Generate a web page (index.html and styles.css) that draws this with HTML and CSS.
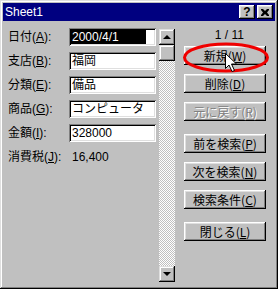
FILE: index.html
```html
<!DOCTYPE html>
<html lang="ja">
<head>
    <meta charset="UTF-8">
    <title>Sheet1</title>
    <link rel="stylesheet" href="styles.css">
</head>
<body>
<div class="window">
    <div class="titlebar">
        <span class="title">Sheet1</span>
        <div class="title-buttons">
            <span class="tbtn help">?</span>
            <span class="tbtn close">
                <svg width="8" height="7" viewBox="0 0 8 7"><path d="M0 0h2l2 2 2-2h2v1l-2 2.5 2 2.5v1h-2l-2-2-2 2h-2v-1l2-2.5-2-2.5z" fill="#000"/></svg>
            </span>
        </div>
    </div>
    <div class="content">
        <div class="fields">
            <div class="row">
                <label>日付(<u>A</u>):</label>
                <div class="field"><span class="selected">2000/4/1</span></div>
            </div>
            <div class="row">
                <label>支店(<u>B</u>):</label>
                <div class="field">福岡</div>
            </div>
            <div class="row">
                <label>分類(<u>E</u>):</label>
                <div class="field">備品</div>
            </div>
            <div class="row">
                <label>商品(<u>G</u>):</label>
                <div class="field">コンピュータ</div>
            </div>
            <div class="row">
                <label>金額(<u>I</u>):</label>
                <div class="field">328000</div>
            </div>
            <div class="row">
                <label>消費税(<u>J</u>):</label>
                <span class="value">16,400</span>
            </div>
        </div>
        <div class="scrollbar">
            <div class="sb-btn"><span class="arrow-up"></span></div>
            <div class="sb-thumb"></div>
            <div class="sb-track"></div>
            <div class="sb-btn"><span class="arrow-down"></span></div>
        </div>
        <div class="actions">
            <div class="counter">1 / 11</div>
            <button class="btn">新規(<u>W</u>)</button>
            <button class="btn">削除(<u>D</u>)</button>
            <button class="btn" disabled>元に戻す(R)</button>
            <button class="btn group">前を検索(<u>P</u>)</button>
            <button class="btn">次を検索(<u>N</u>)</button>
            <button class="btn">検索条件(<u>C</u>)</button>
            <button class="btn group">閉じる(<u>L</u>)</button>
        </div>
    </div>

    <!-- annotation over the 新規 button -->
    <svg class="mark" width="90" height="34" viewBox="0 0 90 34">
        <ellipse cx="45" cy="16.5" rx="41.5" ry="13.5" fill="none" stroke="#f00000" stroke-width="3"/>
    </svg>
    <svg class="cursor" width="13" height="20" viewBox="0 0 13 20">
        <path d="M0.5 0.5v15l3.5-3.5 3 6.5 2.5-1-3-6.5h5z" fill="#fff" stroke="#000" stroke-width="1"/>
    </svg>
</div>
</body>
</html>
```

FILE: styles.css
```css
body {
    margin: 0;
    font-family: "Liberation Sans", "Noto Sans CJK JP", sans-serif;
    font-size: 12px;
    color: #000;
    background: #c0c0c0;
}
.window {
    position: relative;
    width: 278px;
    height: 289px;
    box-sizing: border-box;
    padding: 3px;
    background: #c0c0c0;
    box-shadow: inset -1px -1px #000, inset 1px 1px #dfdfdf, inset -2px -2px #808080, inset 2px 2px #fff;
}
.titlebar {
    height: 18px;
    background: #000080;
    color: #fff;
    display: flex;
    align-items: center;
    justify-content: space-between;
    padding: 0 2px;
}
.title {
    font-size: 12px;
    line-height: 14px;
}
.title-buttons {
    display: flex;
    gap: 2px;
}
.tbtn {
    width: 16px;
    height: 14px;
    box-sizing: border-box;
    background: #c0c0c0;
    color: #000;
    display: flex;
    align-items: center;
    justify-content: center;
    box-shadow: inset -1px -1px #000, inset 1px 1px #fff, inset -2px -2px #808080, inset 2px 2px #dfdfdf;
}
.tbtn.help {
    font-family: "Liberation Sans", sans-serif;
    font-weight: bold;
    font-size: 12px;
    line-height: 12px;
}
.content {
    display: flex;
    padding-top: 7px;
}
.fields {
    width: 153px;
    padding-left: 5px;
    box-sizing: border-box;
}
.row {
    display: flex;
    align-items: center;
    height: 18px;
    margin-bottom: 6px;
}
.row label {
    width: 61px;
    line-height: 14px;
    white-space: nowrap;
}
.field {
    width: 87px;
    height: 18px;
    box-sizing: border-box;
    padding: 2px 0 0 3px;
    background: #fff;
    line-height: 14px;
    white-space: nowrap;
    overflow: hidden;
    box-shadow: inset 1px 1px #808080, inset -1px -1px #fff, inset 2px 2px #000, inset -2px -2px #dfdfdf;
}
.field .selected {
    display: block;
    width: 74px;
    margin-left: -1px;
    padding-left: 1px;
    background: #000;
    color: #fff;
}
.value {
    line-height: 14px;
    padding-left: 3px;
}
.scrollbar {
    margin: 1px 0 0 3px;
    width: 16px;
    height: 253px;
    display: flex;
    flex-direction: column;
}
.sb-btn,
.sb-thumb {
    height: 16px;
    flex: none;
    background: #c0c0c0;
    box-shadow: inset -1px -1px #000, inset 1px 1px #dfdfdf, inset -2px -2px #808080, inset 2px 2px #fff;
    display: flex;
    align-items: center;
    justify-content: center;
}
.sb-track {
    flex: 1;
    background: repeating-conic-gradient(#fff 0 25%, #c0c0c0 0 50%) 0 0 / 2px 2px;
}
.arrow-up,
.arrow-down {
    width: 0;
    height: 0;
    border-left: 4px solid transparent;
    border-right: 4px solid transparent;
}
.arrow-up {
    border-bottom: 4px solid #000;
    margin-top: -1px;
}
.arrow-down {
    border-top: 4px solid #000;
}
.actions {
    margin-left: 9px;
    width: 82px;
    display: flex;
    flex-direction: column;
}
.counter {
    line-height: 14px;
    text-align: right;
    padding-right: 22px;
    margin-bottom: 4px;
}
.btn {
    height: 19px;
    margin-bottom: 9px;
    padding: 0;
    border: none;
    background: #c0c0c0;
    font-family: "Noto Sans CJK JP", sans-serif;
    font-size: 12px;
    line-height: 14px;
    color: #000;
    box-shadow: inset -1px -1px #000, inset 1px 1px #fff, inset -2px -2px #808080, inset 2px 2px #dfdfdf;
}
.btn.group {
    margin-top: 4px;
}
.btn:disabled {
    color: #808080;
    text-shadow: 1px 1px #fff;
}
.mark {
    position: absolute;
    left: 181px;
    top: 41px;
}
.cursor {
    position: absolute;
    left: 225px;
    top: 53px;
}
```
